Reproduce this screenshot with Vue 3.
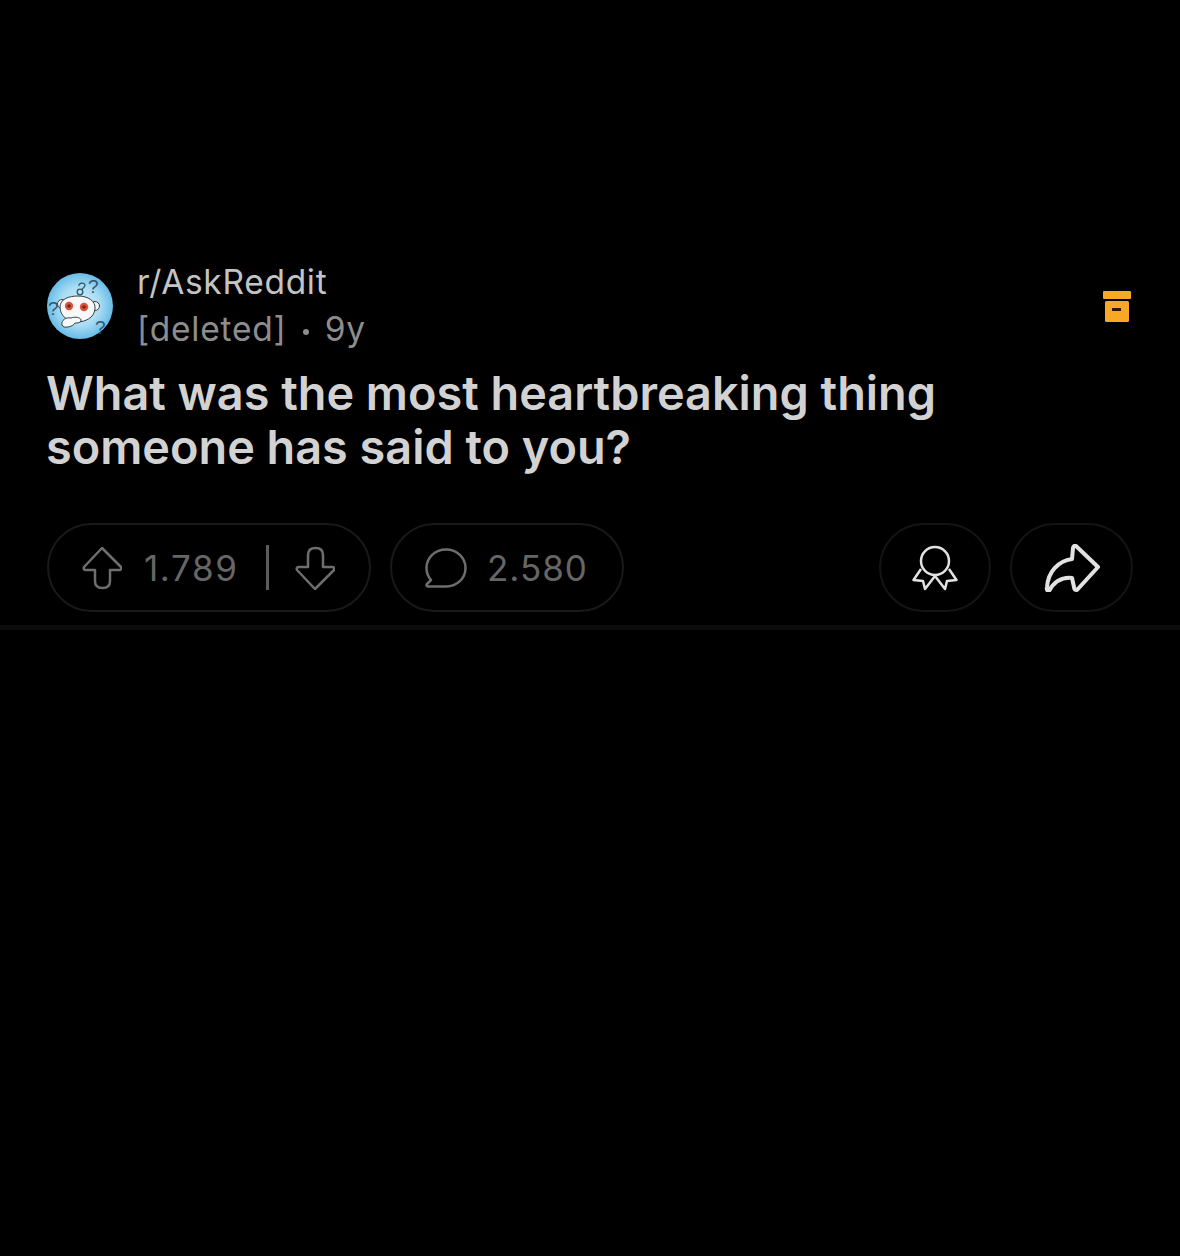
<template>
  <div class="page">
    <div class="post">
      <!-- Шапка поста -->
      <div class="head">
        <svg class="avatar" viewBox="0 0 66 66">
          <defs>
            <radialGradient id="sky" cx="50%" cy="50%" r="50%">
              <stop offset="0%" stop-color="#d8f1fb" />
              <stop offset="60%" stop-color="#a9dcf3" />
              <stop offset="100%" stop-color="#68bce8" />
            </radialGradient>
          </defs>
          <circle cx="33" cy="33" r="33" fill="url(#sky)" />
          <circle cx="15" cy="31" r="4.500" fill="#f6f6f6" stroke="#33414a" stroke-width="1" />
          <circle cx="48" cy="33" r="4.500" fill="#f6f6f6" stroke="#33414a" stroke-width="1" />
          <path d="M13 34C13 26 22 23 31 23 41 23 49 28 48 36 47 45 38 49 30 49 21 49 13 43 13 34Z" fill="#f8f8f8" stroke="#33414a" stroke-width="1" />
          <circle cx="22" cy="33" r="4.200" fill="#d9553a" />
          <circle cx="22" cy="33" r="1.800" fill="#7d2015" />
          <circle cx="37" cy="34" r="4.200" fill="#d9553a" />
          <circle cx="37" cy="34" r="1.800" fill="#7d2015" />
          <path d="M15 52C14 47 19 44 24 45 29 43 35 45 34 48 33 50 30 50 28 50 26 54 16 56 15 52Z" fill="#f8f8f8" stroke="#33414a" stroke-width="1" />
          <circle cx="33" cy="19" r="2.800" fill="none" stroke="#2f566c" stroke-width="1.300" />
          <path d="M32 13C31 10 37 9 38 12 38 15 35 15 35 17" fill="none" stroke="#2f566c" stroke-width="1.300" />
          <text x="41" y="20" class="q">?</text>
          <text x="1" y="42" class="q">?</text>
          <text x="48" y="61" class="q">?</text>
        </svg>
        <div class="meta">
          <div class="sub">r/AskReddit</div>
          <div class="by">[deleted] <span class="dot"></span> 9y</div>
        </div>
        <svg class="archive" viewBox="0 0 28 31">
          <rect x="0" y="0" width="28" height="8" rx="1" fill="#f9a825" />
          <rect x="2" y="10" width="24" height="21" rx="1.500" fill="#f9a825" />
          <rect x="9" y="17" width="9" height="3" fill="#2a1a00" />
        </svg>
      </div>

      <h1 class="title">What was the most heartbreaking thing someone has said to you?</h1>

      <!-- Кнопки действий -->
      <div class="actions">
        <div class="pill votes">
          <svg class="ico dim" viewBox="0 0 40 44">
            <path d="M20 2L39 21Q40 24 37 24H28V35Q28 42 20.500 42 13 42 13 35V24H4Q1 24 2 21Z" />
          </svg>
          <span class="num first">1.789</span>
          <span class="sep"></span>
          <svg class="ico dim" viewBox="0 0 40 44">
            <path d="M20 43L39 24Q40 21 37 21H28V9Q28 2 20.500 2 13 2 13 9V21H4Q1 21 2 24Z" />
          </svg>
        </div>
        <div class="pill comments">
          <svg class="ico dim bubble" viewBox="0 0 42 40">
            <path d="M21 1.500C32 1.500 40.500 9.500 40.500 20S32 38.500 21 38.500H3C1.500 38.500 1 37 2 36L6 32C3 28.500 1.500 24.500 1.500 20 1.500 9.500 10 1.500 21 1.500Z" />
          </svg>
          <span class="num">2.580</span>
        </div>
        <div class="pill award">
          <svg class="ico bright medal" viewBox="0 0 46 46">
            <circle cx="23" cy="16" r="14" />
            <path d="M9 24L1.500 35 11 36 13 44 23 31 33 44 35 36 44.500 35 37 24" />
          </svg>
        </div>
        <div class="pill share">
          <svg class="ico bright arrow" viewBox="0 0 56 48">
            <path d="M32 2L54 23 33 46Q30 46 30 43L28 34C18 33 10 38 5 47 2 47 3 43 3 43 4 28 14 17 28 15L29 4Q30 1 32 2Z" />
          </svg>
        </div>
      </div>
    </div>
    <div class="rule"></div>
  </div>
</template>

<script setup>
</script>

<style>
html,
body {
  background: #000;
}
</style>

<style scoped>
.page {
  min-height: 1256px;
  background: #000;
  padding-top: 259px;
  box-sizing: border-box;
  font-family: Inter, "Liberation Sans", sans-serif;
}

.post {
  padding: 0 47px;
}

.head {
  display: flex;
  align-items: center;
}

.avatar {
  width: 66px;
  height: 66px;
  flex: none;
}

.q {
  font-size: 19px;
  fill: #2f566c;
  font-family: "Liberation Sans", sans-serif;
}

.meta {
  margin-left: 24px;
  flex: 1;
}

.sub {
  font-size: 33.500px;
  line-height: 47px;
  letter-spacing: 0.7px;
  color: #c4c4c4;
}

.by {
  font-size: 33.500px;
  line-height: 47px;
  letter-spacing: 0.8px;
  color: #8d8d8d;
  display: flex;
  align-items: center;
  gap: 16px;
}

.dot {
  width: 6px;
  height: 6px;
  border-radius: 50%;
  background: #8d8d8d;
  margin-top: 4px;
}

.archive {
  width: 28px;
  height: 31px;
  flex: none;
  margin-right: 2px;
}

.title {
  margin: 13px 0 0 -1px;
  max-width: 960px;
  font-size: 46.800px;
  line-height: 54px;
  font-weight: 600;
  color: #d2d2d2;
}

.actions {
  display: flex;
  align-items: center;
  gap: 19px;
  margin-top: 49px;
}

.pill {
  height: 89px;
  box-sizing: border-box;
  border: 2px solid #191919;
  border-radius: 45px;
  display: flex;
  align-items: center;
  justify-content: center;
}

.votes {
  width: 324px;
  justify-content: flex-start;
  padding-left: 33px;
}

.comments {
  width: 234px;
  justify-content: flex-start;
  padding-left: 33px;
}

.award {
  width: 112px;
  margin-left: auto;
  border-color: #141414;
}

.share {
  width: 123px;
  border-color: #141414;
}

.ico {
  width: 40px;
  height: 44px;
  flex: none;
  fill: none;
  stroke-linejoin: round;
}

.dim {
  stroke: #6e6e6e;
  stroke-width: 2.500;
}

.bright {
  stroke: #e2e2e2;
  stroke-width: 3;
}

.bubble {
  width: 42px;
  height: 40px;
}

.medal {
  width: 46px;
  height: 46px;
  stroke-width: 2.500;
}

.arrow {
  width: 56px;
  height: 48px;
  stroke-width: 4;
}

.num {
  font-size: 35px;
  color: #666;
  letter-spacing: 1px;
  margin-left: 20px;
}

.num.first {
  margin-left: 22px;
  letter-spacing: 1.600px;
}

.sep {
  width: 3px;
  height: 45px;
  background: #5c5c5c;
  margin: 0 26px 0 27px;
}

.rule {
  height: 5px;
  background: #0c0c0c;
  margin-top: 13px;
}
</style>
